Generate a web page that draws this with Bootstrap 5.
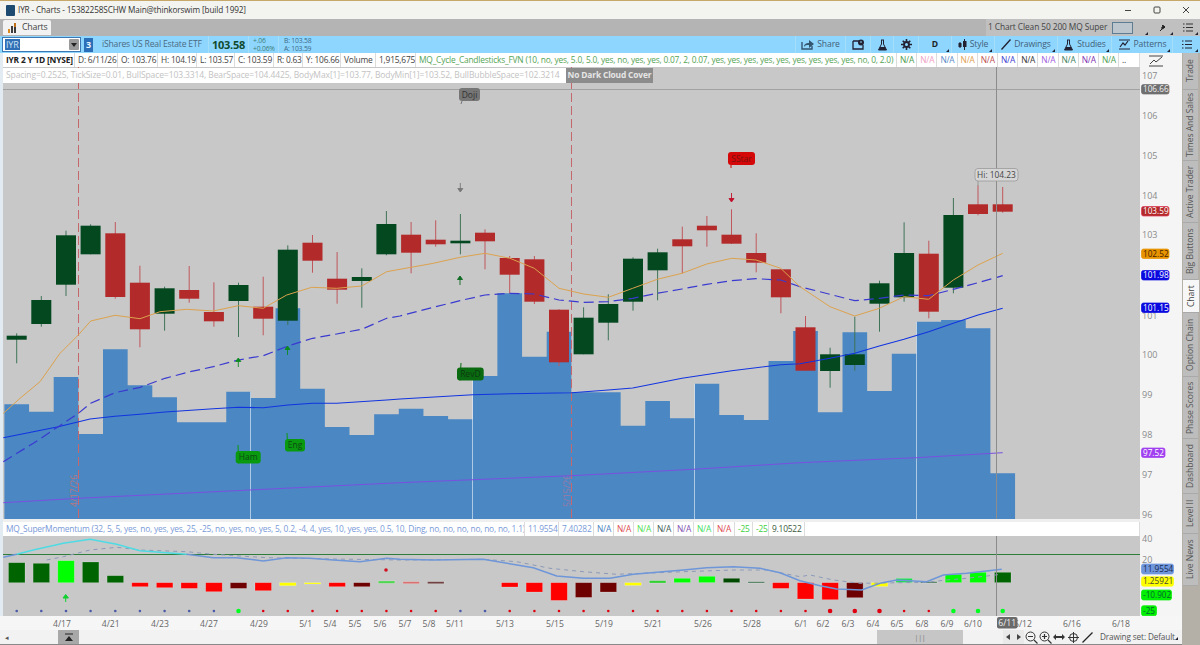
<!DOCTYPE html>
<html lang="en">
<head>
<meta charset="utf-8">
<title>IYR - Charts</title>
<link href="https://cdn.jsdelivr.net/npm/bootstrap@5.3.0/dist/css/bootstrap.min.css" rel="stylesheet">
<style>
html,body{margin:0;height:645px;overflow:hidden}
body{font-family:"Open Sans","Noto Sans",sans-serif;font-size:8.4px;letter-spacing:-.2px;line-height:1;background:#f4f4f4;color:#444}
svg{display:block}
svg text{font-family:"Open Sans","Noto Sans",sans-serif;letter-spacing:0}
.win-title{height:19px;background:#f3f3ef;border-top:1px solid #c6a86a;font-size:8.2px;letter-spacing:-.12px;color:#333}
.win-logo{width:9px;height:11px;margin:0 3px 0 6px;background:#1d4a70;border-radius:1px}
.win-btn{width:29px}
.tab-strip{height:17px;background:#b4b4b4}
.tab-item{height:15px;margin:1px 0 0 3px;padding:0 3px 0 4px;background:#f2f2f2;font-size:8.8px;color:#444;border-radius:2px 2px 0 0}
.layout-zone{width:214px;background:#c0c0c0;color:#444}
.layout-name{width:126px;padding-left:2px;font-size:8.4px;letter-spacing:-.1px;white-space:nowrap}
.layout-box{width:21px;height:12px;border:1px solid #5f7d92;background:#bcc6cc}
.quote-strip{height:17px;background:#8fd6ff;color:#3f4f5a}
.sym-box{width:79px;height:15px;margin-left:2px;background:#fff;border:1px solid #3c78b4;padding-left:2px;font-size:9px}
.sym-sel{background:#2f6fb5;color:#cfe4f6;padding:1px}
.sym-drop{width:10px;height:11px;background:#9a9a9a;margin-left:auto;margin-right:1px;border-radius:1px}
.link-num{width:9px;height:14px;margin-left:3px;background:#2a6fb8;color:#e8f4ff;font-weight:700;font-size:9px}
.etf-name{width:115px;padding-left:9px;font-size:8.6px;color:#4a6a80;white-space:nowrap}
.last-price{width:41px;height:100%;font-size:11px;letter-spacing:-.3px;font-weight:700;color:#0f4a2e;border-left:1px solid #a4def9;border-right:1px solid #a4def9;justify-content:center}
.chg-cell{width:30px;padding-left:4px;font-size:6.8px;color:#3c7f76;line-height:8px;border-right:1px solid #a4def9;height:100%;flex-direction:column;justify-content:center}
.bid-cell{padding-left:5px;font-size:6.8px;color:#3c6a86;line-height:8px;height:100%;flex-direction:column;justify-content:center}
.tool{height:100%;border-left:1px solid #a4def9;gap:3px;justify-content:center;font-size:8.6px;letter-spacing:-.1px;color:#3f5f78;white-space:nowrap}
.corner-mark{position:relative}
.corner-mark::after{content:"";position:absolute;right:2px;bottom:1px;border-style:solid;border-width:0 0 3px 3px;border-color:transparent transparent #223 transparent}
.tw-50{width:50px}.tw-25{width:25px}.tw-23{width:23px}.tw-33{width:33px}.tw-43{width:43px}.tw-63{width:63px}.tw-54{width:54px}.tw-61{width:61px}.tw-28{width:28px}.tw-17{width:17px}
.left-stack{width:1182px}
.chart-col{width:1140px;border-left:3px solid #e3ebf2;background:#efefef}
.data-row{height:14px;background:#fff;white-space:nowrap;overflow:hidden}
.data-cell{height:100%;padding-left:3px;border-right:1px solid #dcdcdc;overflow:hidden;flex:none}
.chart-holder{height:452px;margin-bottom:3px}
.spacing-line{position:absolute;left:0;top:1px;height:15px;white-space:nowrap}
.spacing-text{width:563px;background:#fff;color:#c2c2c2;padding-left:3px;font-size:8.5px;letter-spacing:-.1px;overflow:hidden}
.dark-cloud{width:87px;background:#8c8c8c;color:#e6e6e6;font-weight:700;font-size:8.4px;letter-spacing:-.15px;justify-content:center}
.axis-col{width:42px;background:#f5f5f5}
.date-strip{height:14px;background:#f6f6f6}
.scroll-strip{height:15px;background:#f2f2f2;border-bottom:1px solid #888;font-size:8.2px;letter-spacing:-.12px;color:#555;white-space:nowrap}
.scroll-arrow{width:13px;justify-content:center;color:#555;font-size:7px}
.thumb-a{width:21px;height:100%;margin-left:45px;background:#a8a8a8}
.thumb-b{width:86px;height:100%;margin-left:798px;background:#c6c6c6;font-size:7px;color:#777}
.nav-arrows{margin-left:40px;width:21px;height:100%;background:#e9e9e9}
.icon-slot{width:14.2px;justify-content:center}
.draw-set{margin-left:5px;width:80px}
.side-col{width:18px;background:#b4b0a8;padding-left:1px}
.side-tab{writing-mode:vertical-rl;transform:rotate(180deg);background:#bdbdbd;color:#555;font-size:8.6px;letter-spacing:-.05px;border-top:1px solid #a9a9a9;justify-content:center;white-space:nowrap;width:15px;flex:none}
.side-tab.on{background:#f7f7f7;color:#444;width:16px}
.h-37{height:37px}.h-71{height:71px}.h-62{height:62px}.h-57{height:57px}.h-33{height:33px}.h-64{height:64px}.h-55{height:55px}.h-40{height:40px}.h-52{height:52px}
</style>
</head>
<body class="d-flex flex-column">
<div class="win-title d-flex align-items-center">
  <span class="win-logo"></span><span>IYR - Charts - 15382258SCHW Main@thinkorswim [build 1992]</span>
  <div class="ms-auto d-flex">
    <span class="win-btn d-flex justify-content-center"><svg width="8" height="8"><path d="M1 4.500h6" stroke="#444"/></svg></span>
    <span class="win-btn d-flex justify-content-center"><svg width="8" height="8"><rect x="1" y="1" width="6" height="6" rx="1" fill="none" stroke="#444"/></svg></span>
    <span class="win-btn d-flex justify-content-center"><svg width="8" height="8"><path d="M1 1l6 6M7 1l-6 6" stroke="#444"/></svg></span>
  </div>
</div>
<div class="tab-strip d-flex">
  <div class="tab-item d-flex align-items-center gap-1">
    <svg width="11" height="11"><path d="M1 11V7h2v4zM4 11V4h2v7zM7 11V1h2v10z" fill="#3c3c3c"/><path d="M1 11V7h2v4z" fill="#d98a1f"/><path d="M7 1h2v4H7z" fill="#c2701a"/></svg>
    <span>Charts</span>
  </div>
  <div class="layout-zone ms-auto d-flex align-items-center">
    <span class="layout-name">1 Chart Clean 50 200 MQ Super</span>
    <span class="layout-box"></span>
    <span class="corner-mark tw-17 h-100 d-flex"></span>
    <span class="corner-mark tw-25 h-100 d-flex align-items-center justify-content-center"><svg width="9" height="9"><path d="M2 8l3-3M4 2l3 3M3.500 5l2-2.500 1.500 1.500-2.500 2z" stroke="#222" fill="#222"/></svg></span>
    <span class="corner-mark tw-25 h-100 d-flex align-items-center justify-content-center"><svg width="10" height="9"><path d="M0 1h1.500M0 4.500h1.500M0 8h1.500M3 1h7M3 4.500h7M3 8h7" stroke="#333"/></svg></span>
  </div>
</div>
<div class="quote-strip d-flex align-items-center">
  <div class="sym-box d-flex align-items-center"><span class="sym-sel">IYR</span><span class="sym-drop d-flex align-items-center justify-content-center"><svg width="6" height="4"><path d="M0 0h6L3 4z" fill="#222"/></svg></span></div>
  <span class="link-num d-flex align-items-center justify-content-center">3</span>
  <span class="etf-name">iShares US Real Estate ETF</span>
  <span class="last-price d-flex align-items-center">103.58</span>
  <span class="chg-cell d-flex"><span>+.06</span><span>+0.06%</span></span>
  <span class="bid-cell d-flex"><span>B: 103.58</span><span>A: 103.59</span></span>
  <div class="ms-auto d-flex h-100">
    <span class="tool tw-50 d-flex align-items-center"><svg width="13" height="11"><path d="M1 3v7h10V7" fill="none" stroke="#33566f" stroke-width="1.400"/><path d="M3 8c0-3 2-4 5-4V1l5 4-5 4V6C6 6 4 6 3 8z" fill="#33566f"/></svg>Share</span>
    <span class="tool tw-25 d-flex align-items-center"><svg width="12" height="11"><path d="M1 2h7M1 2v8h10V6" fill="none" stroke="#223" stroke-width="1.300"/><circle cx="9" cy="3.500" r="3" fill="#223"/><path d="M9 2v2" stroke="#8fd6ff"/></svg></span>
    <span class="tool tw-23 d-flex align-items-center"><svg width="11" height="12"><path d="M4 1h3M4.500 1v4L1.500 11h8L6.500 5V1" fill="none" stroke="#223"/><path d="M3 8h5l1.500 3h-8z" fill="#223"/></svg></span>
    <span class="tool tw-25 d-flex align-items-center"><svg width="11" height="11"><g stroke="#223" stroke-width="1.600"><path d="M5.500 0v11M0 5.500h11M1.700 1.700l7.600 7.600M9.300 1.700l-7.600 7.600"/></g><circle cx="5.500" cy="5.500" r="3.400" fill="#223"/><circle cx="5.500" cy="5.500" r="1.500" fill="#8fd6ff"/></svg></span>
    <span class="tool tw-33 corner-mark d-flex align-items-center fw-bold text-dark">D</span>
    <span class="tool tw-43 corner-mark d-flex align-items-center"><svg width="9" height="11"><path d="M2 3v6M6.500 0v11" stroke="#223"/><rect x="0.500" y="4" width="3" height="4" fill="#223"/><rect x="5" y="2" width="3.500" height="6" fill="#223"/></svg>Style</span>
    <span class="tool tw-63 corner-mark d-flex align-items-center"><svg width="10" height="11"><path d="M.5 10.500L9.500 .5" stroke="#223" stroke-width="1.400"/></svg>Drawings</span>
    <span class="tool tw-54 corner-mark d-flex align-items-center"><svg width="11" height="12"><path d="M4 1h3M4.500 1v4L1.500 11h8L6.500 5V1" fill="none" stroke="#223"/><path d="M3 8h5l1.500 3h-8z" fill="#223"/></svg>Studies</span>
    <span class="tool tw-61 corner-mark d-flex align-items-center"><svg width="13" height="11"><path d="M1 1h11M1 10h11" stroke="#223"/><path d="M2 8l3-4 2 2 3-4" fill="none" stroke="#223" stroke-width="1.200"/></svg>Patterns</span>
    <span class="tool tw-28 corner-mark d-flex align-items-center"><svg width="10" height="9"><path d="M0 1h1.500M0 4.500h1.500M0 8h1.500M3 1h7M3 4.500h7M3 8h7" stroke="#223"/></svg></span>
  </div>
</div>
<div class="d-flex flex-grow-1">
  <div class="left-stack d-flex flex-column">
    <div class="d-flex">
      <div class="chart-col d-flex flex-column">
        <div id="studyRow" class="data-row d-flex align-items-center"></div>
        <div class="chart-holder position-relative">
          <svg id="priceChart" width="1137" height="452" viewBox="3 67 1137 452"></svg>
          <div class="spacing-line d-flex">
            <div class="spacing-text d-flex align-items-center">Spacing=0.2525, TickSize=0.01, BullSpace=103.3314, BearSpace=104.4425, BodyMax[1]=103.77, BodyMin[1]=103.52, BullBubbleSpace=102.3214</div>
            <div class="dark-cloud d-flex align-items-center">No Dark Cloud Cover</div>
          </div>
        </div>
        <div id="lowerRow" class="data-row d-flex align-items-center"></div>
        <svg id="lowerChart" width="1137" height="80" viewBox="3 536 1137 80"></svg>
      </div>
      <div class="axis-col"><svg id="axisSvg" width="42" height="563" viewBox="1140 53 42 563"></svg></div>
    </div>
    <div class="date-strip"><svg id="dateSvg" width="1182" height="14" viewBox="0 616 1182 14"></svg></div>
    <div class="scroll-strip d-flex align-items-center">
      <span class="scroll-arrow d-flex">◂</span>
      <span class="thumb-a d-flex align-items-center justify-content-center"><svg width="10" height="9"><path d="M1 1h8" stroke="#222"/><path d="M1 8l4-5 4 5z" fill="#222"/></svg></span>
      <span class="thumb-b d-flex align-items-center justify-content-center">|||</span>
      <span class="nav-arrows d-flex align-items-center justify-content-around"><svg width="4" height="6"><path d="M4 0v6L0 3z" fill="#444"/></svg><svg width="4" height="6"><path d="M0 0v6l4-3z" fill="#444"/></svg></span>
      <span class="icon-slot d-flex"><svg width="13" height="13"><circle cx="5.500" cy="5.500" r="4.500" fill="none" stroke="#333"/><path d="M3 5.500h5M9 9l3.500 3.500" stroke="#333" stroke-width="1.200"/></svg></span>
      <span class="icon-slot d-flex"><svg width="13" height="13"><circle cx="5.500" cy="5.500" r="4.500" fill="none" stroke="#333"/><path d="M3 5.500h5M5.500 3v5M9 9l3.500 3.500" stroke="#333" stroke-width="1.200"/></svg></span>
      <span class="icon-slot d-flex"><svg width="12" height="8"><path d="M0 4l3-3v2h6V1l3 3-3 3V5H3v2z" fill="#333"/></svg></span>
      <span class="icon-slot d-flex"><svg width="11" height="11"><circle cx="5.500" cy="5.500" r="4" fill="none" stroke="#333"/><path d="M5.500 0v11M0 5.500h11" stroke="#333"/></svg></span>
      <span class="icon-slot d-flex"><svg width="11" height="11"><path d="M.5 10.500L10.500 .5" stroke="#222" stroke-width="1.300"/></svg></span>
      <span class="draw-set corner-mark">Drawing set: Default</span>
    </div>
  </div>
  <div class="side-col d-flex flex-column" id="sideCol"></div>
</div>
<script src="https://cdn.jsdelivr.net/npm/bootstrap@5.3.0/dist/js/bootstrap.bundle.min.js"></script>
<script>
const R='#b22a2a',G='#03481f';
const C=[
['g',333.3,335.7,339.7,363.3],['g',296,300,324,326.7],['g',230.7,235.3,284.7,296],['g',224.3,225.7,254.3,254.3],
['r',222,233.3,297,298.7],['r',265.7,282.7,329.3,347.3],['g',286.7,288.3,313.7,330.7],['r',266,290,298.7,302.7],
['r',282.3,312,321.3,326.7],['g',282.7,285,301,337],['r',276.7,306.7,318.7,335.3],['g',245.3,249.7,320.7,325],
['r',235,242.7,260.7,272.7],['r',252,278.7,289.7,303.7],['g',268.3,277,281,307.7],['g',211,224,254.3,255.3],
['r',222,234.7,252.7,273.3],['r',220.3,239.7,244.3,246.7],['g',214,240.7,243.3,254.3],['r',229.3,232.7,241.3,269.3],
['r',256,258,274.7,293.3],['r',256,259.3,301.7,304],['r',309.3,309.7,362.3,366],['g',307.3,317.7,354.3,354.3],
['g',294.3,304,322.7,340.3],['g',257.3,258.7,301.7,310.7],['g',248.7,252.3,270.3,300.3],['r',226.7,239.3,246.3,273.3],
['r',216,225.7,230.3,246.7],['r',209.3,234.7,243.7,244],['r',233.3,253,262.7,272.3],['r',269.3,269.3,297.3,313.3],
['r',316,327.3,370.7,370.7],['g',347.7,354.3,371,387.7],['g',316.7,354.3,365,370.7],['g',280.7,283.3,303.7,331.7],
['g',222.3,253,297.3,301.7],['r',240.7,253.7,311.7,318.3],['g',198,215,287.7,293.3],['r',185.3,204.3,214,215.3],['r',187,204.3,211.7,212.7]];
const V=[404.3,411.7,377,434,349.3,385.3,397.3,422.3,422.3,391.7,398,308.3,388.7,427,435,414.3,408.7,416,419.3,376,293.3,356.7,331.7,392.3,392.3,425.7,401,418.3,383.7,415,420,361,331,412.3,332.3,391,353.7,321.7,320,328.3,473.3];
const cx=i=>16.7+24.65*i;
function pts(list,xo,yo){return list.map(p=>(p[0]/3+xo).toFixed(1)+','+(p[1]/3+yo).toFixed(1));}
function poly(parts,color,w,extra){return `<polyline fill="none" stroke="${color}" stroke-width="${w}" ${extra||''} points="${parts.join(' ')}"/>`;}
const orange=[...pts([[10,670],[60,625],[120,575],[180,490],[235,435],[272,393],[345,376],[420,386],[480,365],[560,358],[640,363],[715,347],[790,355],[860,315],[935,292],[1010,295],[1085,288],[1160,245],[1200,238]],0,190),
 ...pts([[100,220],[180,202],[255,190],[330,205],[403,235],[477,295],[551,312],[625,322],[698,295],[772,268],[846,250],[920,222],[995,205],[1068,210],[1142,235],[1200,290]],400,190),
 ...pts([[90,620],[164,648],[238,625],[312,590],[386,598],[460,540],[534,495],[608,460]],800,100)];
const dash=[...pts([[10,815],[100,760],[175,710],[235,670],[272,640],[345,608],[420,592],[495,565],[570,545],[640,530],[715,510],[790,497],[864,468],[938,445],[1010,432],[1085,418],[1160,385],[1200,378]],0,190),
 ...pts([[100,352],[180,332],[255,315],[330,310],[403,312],[477,330],[551,337],[625,335],[698,325],[772,310],[846,297],[920,283],[995,272],[1068,266],[1142,270],[1200,290]],400,190),
 ...pts([[90,583],[164,602],[238,595],[312,585],[386,587],[460,568],[534,548],[608,527]],800,100)];
const sma=[...pts([[10,743],[100,725],[175,710],[270,687],[345,679],[420,673],[495,666],[640,656],[715,652],[790,653],[864,645],[938,640],[1010,640],[1160,630],[1200,627]],0,190),
 ...pts([[218,614],[330,611],[515,608],[625,600],[698,594],[846,565],[995,542],[1142,524],[1200,521]],400,190),
 ...pts([[90,775],[164,760],[238,738],[312,718],[386,695],[460,670],[534,645],[608,625]],800,100)];
const purple=[...pts([[10,938],[235,925],[750,900],[1200,878]],0,190),...pts([[515,857],[880,838],[1200,818]],400,190),...pts([[350,1073],[608,1058]],800,100)];
function arrow(x,y,c,up){const d=up?`M${x} ${y+9}V${y+3}M${x-2.500} ${y+3.500}L${x} ${y}L${x+2.500} ${y+3.500}Z`:`M${x} ${y}V${y+6}M${x-2.500} ${y+5.500}L${x} ${y+9}L${x+2.500} ${y+5.500}Z`;return `<path d="${d}" stroke="${c}" fill="${c}" stroke-width=".9"/>`;}
function tag(x,y,w,h,txt,bg,fg,px,py){return `<path d="M${x+3} ${y+h}L${px} ${py}" stroke="${bg}"/><rect x="${x}" y="${y}" width="${w}" height="${h}" rx="3" fill="${bg}"/><text x="${x+w/2}" y="${y+h-3.500}" text-anchor="middle" font-size="8.500" fill="${fg}">${txt}</text>`;}
let s=`<rect x="3" y="67" width="1137" height="452" fill="#c8c8c8"/>`;
s+=`<path d="M3 89.500H1140" stroke="#a2a2a2"/>`;
let vp=`M4.4 519`;V.forEach((t,i)=>{vp+=`V${t}H${(4.4+24.65*(i+1)).toFixed(2)}`;});vp+=`V519Z`;
s+=`<path d="${vp}" fill="#4a87c3"/>`;
[[250.5,391.7],[472.5,376],[694.5,383.7],[916.5,321.7]].forEach(p=>{s+=`<path d="M${p[0]} ${p[1]}V519" stroke="#fff" stroke-opacity=".55"/>`;});
[78.5,571.5].forEach(x=>{s+=`<path d="M${x} 67V519" stroke="#c4686e" stroke-dasharray="9 4"/>`;});
s+=`<text transform="translate(77,507) rotate(-90)" font-size="9" fill="#b37a82">4/17/26</text><text transform="translate(570,507) rotate(-90)" font-size="9" fill="#9a7aa6">5/15/26</text>`;
C.forEach((c,i)=>{const x=cx(i),col=c[0]=='r'?R:G,wc=c[0]=='r'?'#c0575c':'#3f7458';
 s+=`<path d="M${x.toFixed(1)} ${c[1]}V${c[4]}" stroke="${wc}"/><rect x="${(x-10).toFixed(1)}" y="${c[2]}" width="20" height="${(c[3]-c[2]).toFixed(1)}" fill="${col}"/>`;});
s+=poly(purple,'#7a50e0',1)+poly(sma,'#1234e0',1.1)+poly(dash,'#3a3ad0',1.2,'stroke-dasharray="10 5"')+poly(orange,'#dca24e',1);
s+=`<path d="M996.500 67V519" stroke="#8c8c8c"/>`;
s+=arrow(460.3,183,'#777',false)+arrow(731.5,193,'#c0102a',false)+arrow(460,276,'#0e6a20',true)+arrow(238.3,358,'#0c8a20',true)+arrow(287.5,346,'#0c8a20',true);
s+=tag(459,88,21,13,'Doji','#767676','#333',461,104)+tag(728,152,27,13,'SStar','#d40808','#7a1010',731,168);
s+=tag(235.7,451,25,12.500,'Ham','#0a9a10','#0a4a10',238,445)+tag(285,439,20,12.500,'Eng','#0a9a10','#0a4a10',287,433)+tag(457,367.500,26.700,13,'RevD','#0a6a10','#0a3a10',461,363);
s+=`<path d="M978 181V186" stroke="#999"/><rect x="975" y="168.500" width="43" height="12.500" rx="3" fill="#d6d6d6" stroke="#9a9a9a" stroke-width=".8"/><text x="996.500" y="178" text-anchor="middle" font-size="8.400" fill="#444">Hi: 104.23</text>`;
document.getElementById('priceChart').innerHTML=s;

const LB=[[143,203,'dg'],[145,203,'dg'],[137,203,'li'],[141,203,'dg'],[182,203,'dg'],[203,215,'re'],[203,218,'re'],[203,220,'re'],[203,230,'re'],[203,220,'dr'],[203,227,'re'],[203,212,'ye'],[203,207,'ye'],[203,215,'re'],[203,215,'dr'],[198,205,'lt'],
[200,206,'pk'],[200,206,'mr'],null,null,[203,216,'re'],[203,231,'re'],[203,256,'re'],[203,247,'dr'],[203,231,'dr'],[203,211,'ye'],[197,204,'lm'],[190,203,'li'],[184,203,'li'],[190,203,'ng'],[200,204,'tg'],[203,220,'re'],[203,252,'re'],[203,254,'re'],[203,248,'dr'],[203,214,'ye'],[190,203,'sg'],[200,204,'tg'],[178,203,'li'],[172,203,'li'],[172,203,'dg']];
const LC={dg:'#006400',li:'#00ff00',re:'#ff0000',dr:'#6e0000',ye:'#ffff00',lt:'#4fd64f',pk:'#d97070',mr:'#704040',lm:'#30d030',ng:'#004a00',tg:'#4a7a5a',sg:'#20dc50'};
const line1=pts([[50,118],[100,105],[190,85],[270,73],[350,88],[420,107],[560,118]],0,515);
const line2=[...pts([[10,127],[50,118]],0,515)];
const line3=[...pts([[560,118],[640,128],[710,128],[790,138],[860,128],[930,130],[1000,135],[1080,140],[1160,130]],0,515),...pts([[0,133],[100,135],[250,133],[400,158],[470,183],[550,190],[630,190],[700,178],[850,165],[920,158],[1000,155],[1080,160],[1140,173],[1200,197]],400,515),...pts([[60,212],[110,222],[185,225],[240,205],[290,195],[380,200],[430,180],[500,175],[605,163]],800,515)];
const grayL=[...pts([[140,135],[190,125],[270,105],[350,97],[420,105],[560,110],[640,118],[800,128],[1000,132],[1200,135]],0,515),...pts([[250,133],[350,140],[450,160],[550,170],[650,178],[850,170],[1000,165],[1100,165],[1200,185]],400,515),...pts([[30,180],[100,195],[180,205],[380,202],[440,195],[500,190],[605,178]],800,515)];
let l=`<rect x="3" y="536" width="1137" height="80" fill="#c8c8c8"/><path d="M3 554.500H1140" stroke="#2e7d3a"/>`;
LB.forEach((b,i)=>{if(!b)return;const y=515+b[0]/3,h=Math.max((b[1]-b[0])/3,1);l+=`<rect x="${(cx(i)-8.2).toFixed(1)}" y="${y.toFixed(1)}" width="16.500" height="${h.toFixed(1)}" fill="${LC[b[2]]}" stroke="#fff" stroke-opacity=".28" stroke-width=".7"/>`;});
l+=poly(grayL,'#8c9ab8',1,'stroke-dasharray="4 4"')+poly(line2,'#6e96d8',1.4)+poly(line1,'#4fdbe4',1.6)+poly(line3,'#6e96d8',1.5);
const big=new Set([9,33,34,35,38,39,40]),blue=new Set([0,1,2,3,4,5,6,7,8,18,19]);
for(let i=0;i<41;i++){const c=blue.has(i)?'#4a5aa8':(i==9||i>=38?'#00ff20':'#e00010');l+=`<circle cx="${cx(i).toFixed(1)}" cy="611" r="${big.has(i)?2.3:1.300}" fill="${c}"/>`;}
l+=`<circle cx="386" cy="570" r="1.800" fill="#d01020"/>`;
l+=`<path d="M65.700 602V597M63 598L65.700 594.500L68.400 598Z" stroke="#10d030" fill="#10d030"/>`;
l+=`<path d="M996.500 536V616" stroke="#8c8c8c"/>`;
document.getElementById('lowerChart').innerHTML=l;

function box(y,h,w,t,bg,fg,st){return `<rect x="1141.500" y="${y}" width="${w}" height="${h}" rx="2" fill="${bg}" stroke="${st||bg}" stroke-width=".7"/><text x="1143" y="${y+h-2}" font-size="8.200" fill="${fg}">${t}</text>`;}
let a=`<path d="M1149 56h14M1149 66h14" stroke="#444"/><path d="M1150 64l4-4 2 2 6-5" fill="none" stroke="#444"/>`;
[[107,76],[106,116],[105,156],[104,196],[103,235],[101,315.500],[100,355],[99,395],[98,435],[97,474.500],[96,515],[40,539],[20,560]].forEach(p=>{a+=`<text x="1142" y="${p[1]+3.200}" font-size="9" fill="#8a8a8a">${p[0]}</text>`;});
a+=box(84.500,9.500,27.500,'106.66','#6f6f6f','#f2f2f2')+box(206.500,9.500,27.500,'103.59',R,'#fff','#d35')+box(249,9.500,27.500,'102.52','#e89400','#442200')+box(270.500,9.500,27.500,'101.98','#0a0ae0','#fff')+box(303,9.500,27.500,'101.15','#0a0ae0','#fff')+box(448,9.500,23.500,'97.52','#a040f0','#fff');
a+=box(564,10,32,'11.9554','#6f96dc','#1a2a50')+box(576.700,9.500,32,'1.25921','#ffff00','#443')+box(590,10,30,'-10.902','#00ee00','#063')+box(605.700,10,15,'-25','#00ee00','#063');
document.getElementById('axisSvg').innerHTML=a;

const D=[['4/17',62],['4/21',110.7],['4/23',160],['4/27',209],['4/29',259],['5/1',305.7],['5/4',330],['5/5',355],['5/6',380],['5/7',405],['5/8',429],['5/11',455],['5/13',505],['5/15',555],['5/19',604],['5/21',653],['5/26',703],['5/28',752],['6/1',801],['6/2',823],['6/3',848],['6/4',873],['6/5',897],['6/8',922],['6/9',947],['6/10',973],['6/12',1023],['6/16',1072],['6/18',1121]];
let d=D.map(p=>`<text x="${p[1]}" y="626.500" text-anchor="middle" font-size="8.600" fill="#666">${p[0]}</text>`).join('');
d+=`<rect x="997" y="617" width="20.500" height="11.500" rx="2" fill="#6a6a6a"/><text x="1007.200" y="626" text-anchor="middle" font-size="8.600" fill="#f0f0f0">6/11</text>`;
document.getElementById('dateSvg').innerHTML=d;

function cells(el,list,end){const h=document.getElementById(el);list.forEach((c,i)=>{const nx=i+1<list.length?list[i+1][1]:end;const sp=document.createElement('span');sp.className='data-cell d-flex align-items-center'+(c[3]?' fw-bold':'');sp.style.width=(nx-c[1])+'px';sp.style.color=c[2];sp.textContent=c[0];h.appendChild(sp);});}
const dk='#444',na=[['#4d9a4d'],['#f0a0c4'],['#5a8ac8'],['#e0a050'],['#bd5050'],['#4040d0'],['#333'],['#a060e0'],['#3f7f60'],['#8030b0'],['#50a050']];
const SR=[['IYR 2 Y 1D [NYSE]',3,'#222',1],['D: 6/11/26',75,dk],['O: 103.76',118,dk],['H: 104.19',158,dk],['L: 103.57',197,dk],['C: 103.59',235,dk],['R: 0.63',274,dk],['Y: 106.66',303,dk],['Volume',341,dk],['1,915,675',376,dk],['MQ_Cycle_Candlesticks_FVN (10, no, yes, 5.0, 5.0, yes, no, yes, yes, 0.07, 2, 0.07, yes, yes, yes, yes, yes, yes, yes, yes, yes, no, 0, 2.0)',416,'#55a455']];
na.forEach((c,i)=>SR.push(['N/A',897+20.2*i,c[0]]));SR.push(['..',1119.2,'#333']);
cells('studyRow',SR,1140);
const LR=[['MQ_SuperMomentum (32, 5, 5, yes, no, yes, yes, 25, -25, no, yes, no, yes, 5, 0.2, -4, 4, yes, 10, yes, yes, 0.5, 10, Ding, no, no, no, no, no, no, 1.1)',3,'#7a9ad8'],['11.9554',525,'#7a9ad8'],['7.40282',559,'#7a9ad8'],['N/A',594,'#4a7fc0'],['N/A',614,'#e04a50'],['N/A',634,'#50e050'],['N/A',654,'#3a5a50'],['N/A',674,'#8050b0'],['N/A',694,'#40e060'],['N/A',714,'#e04a50'],['-25',735,'#40d040'],['-25',753,'#40d040'],['9.10522',769,'#3a5a40'],['',805,'#000']];
cells('lowerRow',LR,1140);
const T=[['Trade','h-37'],['Times And Sales','h-71'],['Active Trader','h-62'],['Big Buttons','h-57'],['Chart','h-33 on'],['Option Chain','h-64'],['Phase Scores','h-62'],['Dashboard','h-55'],['Level II','h-40'],['Live News','h-52']];
const side=document.getElementById('sideCol');
T.forEach(t=>{const e=document.createElement('div');e.className='side-tab d-flex align-items-center '+t[1];e.textContent=t[0];side.appendChild(e);});
</script>
</body>
</html>
